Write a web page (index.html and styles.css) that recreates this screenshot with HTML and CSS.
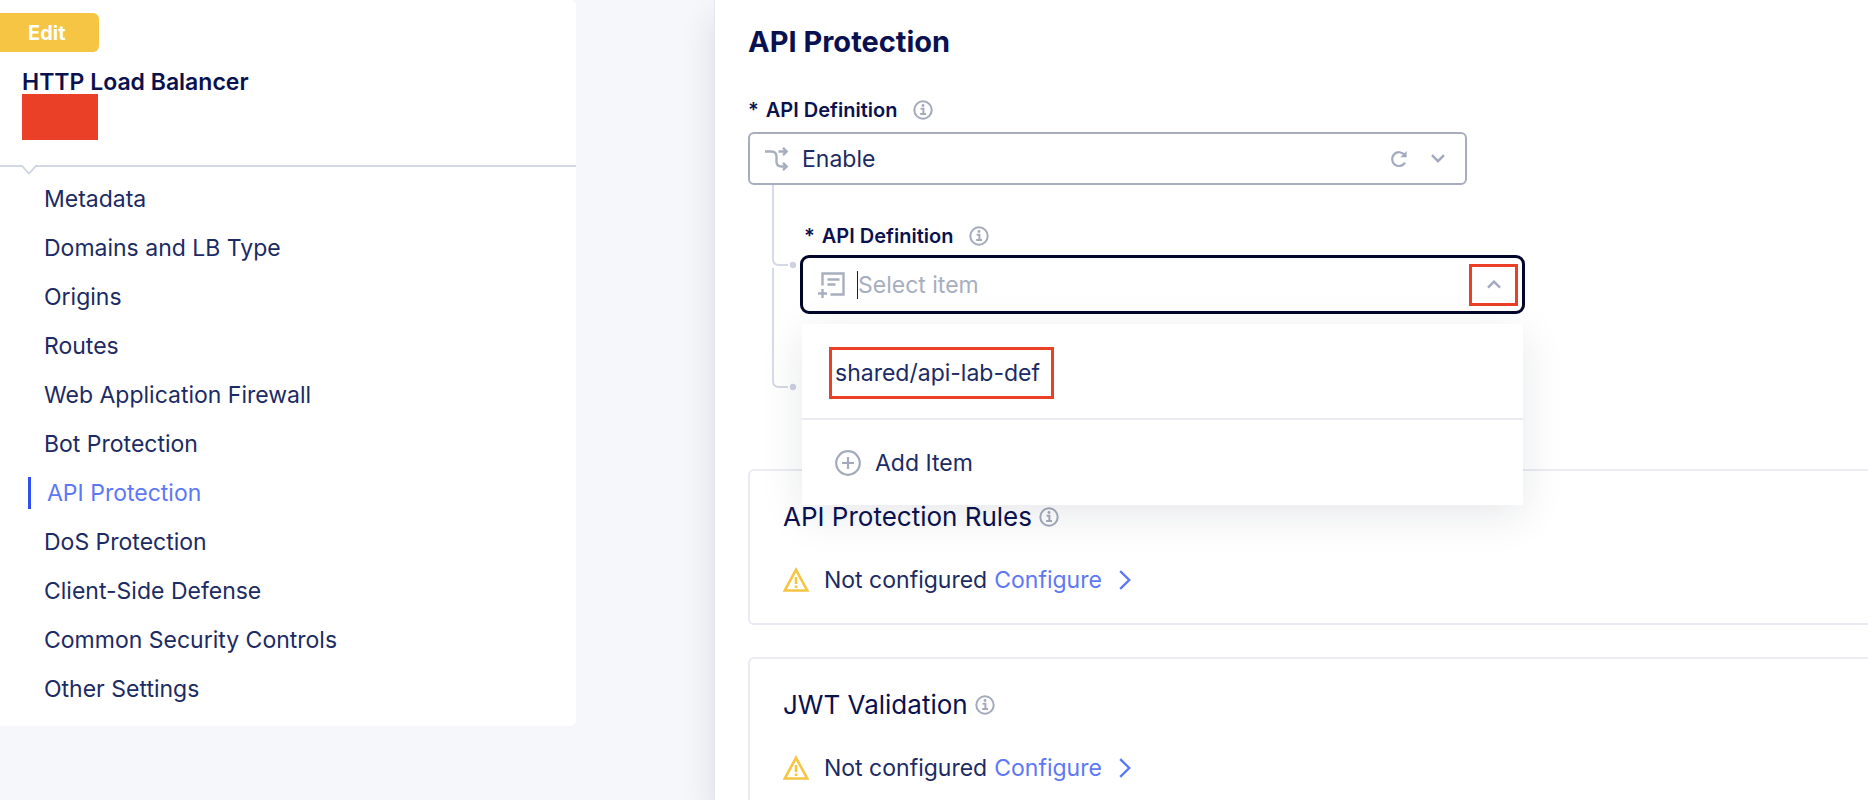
FILE: index.html
```html
<!DOCTYPE html>
<html lang="en">
<head>
<meta charset="utf-8">
<title>HTTP Load Balancer - API Protection</title>
<link rel="stylesheet" href="styles.css">
</head>
<body>
<svg class="sprite" aria-hidden="true">
  <symbol id="info" viewBox="0 0 20 20">
    <circle cx="10" cy="10" r="8.7" fill="none" stroke="currentColor" stroke-width="2"/>
    <path d="M7.6 8.8h2.8v5.2M7.2 14.1h5.8" fill="none" stroke="currentColor" stroke-width="2"/>
    <circle cx="10" cy="5.5" r="1.4" fill="currentColor"/>
  </symbol>
  <symbol id="warning" viewBox="0 0 26 26">
    <path d="M13 2.8 24.2 23.5H1.8Z" fill="none" stroke="currentColor" stroke-width="2.6"/>
    <path d="M13 10v7M13 18.6v2.4" fill="none" stroke="currentColor" stroke-width="2.6"/>
  </symbol>
  <symbol id="next" viewBox="0 0 12 20">
    <path d="m1.2 1.2 9 8.8-9 8.8" fill="none" stroke="currentColor" stroke-width="2.4"/>
  </symbol>
</svg>
<div class="layout">
  <aside class="sidebar">
    <button class="edit" type="button">Edit</button>
    <div class="resource">
      <h2 class="resource-type">HTTP Load Balancer</h2>
      <div class="resource-name"></div>
    </div>
    <div class="divider">
      <svg class="notch" width="16" height="12" viewBox="0 0 16 12"><path d="M0 0h16v1.5L8 9.5 0 1.5Z" fill="#fff"/><path d="M0 1h1l7 7.5L15 1h1" fill="none" stroke="#cfd4e4" stroke-width="1.8"/></svg>
    </div>
    <nav class="nav">
      <a href="#">Metadata</a>
      <a href="#">Domains and LB Type</a>
      <a href="#">Origins</a>
      <a href="#">Routes</a>
      <a href="#">Web Application Firewall</a>
      <a href="#">Bot Protection</a>
      <a href="#" class="active" aria-current="page">API Protection</a>
      <a href="#">DoS Protection</a>
      <a href="#">Client-Side Defense</a>
      <a href="#">Common Security Controls</a>
      <a href="#">Other Settings</a>
    </nav>
  </aside>
  <main class="content">
    <h1 class="title">API Protection</h1>
    <div class="field-label">
      <label for="mode"><span class="star">*</span>API Definition</label>
      <svg class="info" width="20" height="20"><use href="#info"/></svg>
    </div>
    <div class="field">
      <svg class="field-icon" width="24" height="24" viewBox="0 0 24 24" fill="none" stroke="currentColor" stroke-width="2.4"><path d="M0 4.5h6.5q5 0 5 5v5q0 5 5 5H22M13.5 4.5H22M18 .8 21.7 4.5 18 8.2M18 15.8l3.7 3.7-3.7 3.7"/></svg>
      <select id="mode" class="field-control"><option>Enable</option></select>
      <button class="tool" type="button" aria-label="Reset"><svg width="18" height="18" viewBox="0 0 18 18"><path d="M14.6 5A6.9 6.9 0 1 0 15 12.6" fill="none" stroke="currentColor" stroke-width="2.2"/><path d="M16.6 1v6.2h-6.2Z" fill="currentColor"/></svg></button>
      <svg class="caret" width="14" height="9" viewBox="0 0 14 9"><path d="m1 1.2 6 6 6-6" fill="none" stroke="currentColor" stroke-width="2.4"/></svg>
    </div>
    <div class="nested">
      <svg class="branches" width="24" height="212" viewBox="0 0 24 212"><path d="M1 0v74q0 6 6 6h9M1 83v113q0 6 6 6h9" fill="none" stroke="#d3d7e6" stroke-width="1.8"/><circle cx="21" cy="80" r="3.2" fill="#cdd1e2"/><circle cx="21" cy="202" r="3.2" fill="#cdd1e2"/></svg>
      <div class="field-label">
        <label for="definition"><span class="star">*</span>API Definition</label>
        <svg class="info" width="20" height="20"><use href="#info"/></svg>
      </div>
      <div class="combo">
        <div class="field focused">
          <svg class="field-icon" width="28" height="28" viewBox="0 0 28 28" fill="none" stroke="currentColor" stroke-width="2.4"><path d="M4.5 14.5V2.5h21v21H12.5M9.5 8.5h12M9.5 13.5h8M0 22.5h9M4.5 18v9"/></svg>
          <span class="cursor"></span>
          <input id="definition" class="field-control" type="text" placeholder="Select item" role="combobox" aria-expanded="true" aria-controls="options">
          <button class="toggle" type="button" aria-label="Close list"><svg width="14" height="9" viewBox="0 0 14 9"><path d="m1 7.6 6-6 6 6" fill="none" stroke="currentColor" stroke-width="2.4"/></svg></button>
        </div>
        <div class="menu" id="options">
          <div class="menu-list"><button class="option" type="button">shared/api-lab-def</button></div>
          <button class="add" type="button"><svg width="26" height="26" viewBox="0 0 26 26" fill="none" stroke="currentColor" stroke-width="2.2"><circle cx="13" cy="13" r="11.8"/><path d="M13 7v12M7 13h12"/></svg>Add Item</button>
        </div>
      </div>
    </div>
    <div class="cards">
      <section class="card">
        <h3 class="card-title">API Protection Rules<svg class="info" width="20" height="20"><use href="#info"/></svg></h3>
        <div class="status"><svg class="warning" width="26" height="26"><use href="#warning"/></svg><span>Not configured</span><a href="#">Configure<svg width="12" height="20"><use href="#next"/></svg></a></div>
      </section>
      <section class="card">
        <h3 class="card-title">JWT Validation<svg class="info" width="20" height="20"><use href="#info"/></svg></h3>
        <div class="status"><svg class="warning" width="26" height="26"><use href="#warning"/></svg><span>Not configured</span><a href="#">Configure<svg width="12" height="20"><use href="#next"/></svg></a></div>
      </section>
    </div>
  </main>
</div>
</body>
</html>
```
FILE: styles.css
```css
* { box-sizing: border-box; }
body { margin: 0; font-family: Inter, "Liberation Sans", sans-serif; font-size: 23px; line-height: 32px; color: #1c2b63; background: #f6f7fa; }
button, input, select { font: inherit; color: inherit; border: 0; padding: 0; background: none; }
h1, h2, h3 { margin: 0; }
svg { display: block; flex: none; }
.sprite { position: absolute; width: 0; height: 0; }
.layout { display: flex; height: 100vh; overflow: hidden; }

.sidebar { flex: 0 0 576px; align-self: flex-start; padding: 13px 0 13px; background: #fff; border-radius: 0 6px 6px 0; }
.edit { display: block; height: 39px; padding: 0 33px 0 28px; border-radius: 0 6px 6px 0; background: #f5c543; color: #fff; font-size: 20px; font-weight: 700; }
.resource { padding: 18px 22px 25px; }
.resource-type { font-size: 23px; line-height: 24px; font-weight: 600; color: #0a1150; }
.resource-name { width: 76px; height: 46px; background: #ea4027; }
.divider { position: relative; border-top: 2px solid #d3d8e6; }
.notch { position: absolute; left: 21px; top: -2px; }
.nav { display: flex; flex-direction: column; padding-top: 7px; }
.nav a { display: flex; align-items: center; height: 49px; padding-left: 44px; color: inherit; text-decoration: none; }
.nav .active { color: #5e78f5; padding-left: 28px; }
.active::before { content: ""; width: 3px; height: 32px; margin-right: 16px; background: #2f4ff0; }

.content { flex: 1; min-width: 0; margin-left: 138px; padding: 24px 0 0 33px; border-left: 1px solid #e3e6ee; background: #fff; box-shadow: 0 16px 32px rgba(20, 30, 80, .12); }
.title { font-size: 29px; line-height: 36px; font-weight: 700; color: #0a1150; }
.field-label { display: flex; align-items: center; gap: 16px; height: 24px; font-size: 20px; font-weight: 600; color: #0a1150; }
.star { margin-right: 7px; }
.info { color: #a3aabb; }
.title + .field-label { margin: 38px 0 10px; }
.field { display: flex; align-items: center; width: 719px; height: 53px; padding: 0 20px 0 15px; border: 2px solid #a7adbd; border-radius: 6px; background: #fff; }
.field-icon { color: #a7aebf; }
.field-control { flex: 1; min-width: 0; appearance: none; outline: none; }
.field-control::placeholder { color: #a7aebf; opacity: 1; }
select.field-control { height: 32px; margin-left: 13px; }
.tool, .caret, .toggle { color: #a3aabf; }
.tool { margin-right: 23px; }

.nested { position: relative; padding: 39px 0 0 52px; }
.nested .field-label { padding-left: 4px; margin-bottom: 7px; }
.branches { position: absolute; left: 24px; top: 0; }
.combo { position: relative; width: 725px; }
.focused { width: 725px; height: 59px; padding: 0 4px 0 15px; border: 3px solid #03062b; border-radius: 9px; }
.cursor { width: 1px; height: 28px; margin-left: 11px; background: #0f1e57; }
.toggle { display: grid; place-items: center; width: 49px; height: 42px; border: 3px solid #ea4027; }
.menu { position: absolute; z-index: 1; left: 2px; right: 2px; top: 69px; background: #fff; box-shadow: 0 10px 40px rgba(20, 25, 50, .1); }
.menu-list { padding: 23px 27px 19px; border-bottom: 2px solid #e9eaf2; }
.option { display: block; height: 52px; padding: 0 11px 0 3px; border: 3px solid #ea4027; }
.add { display: flex; align-items: center; gap: 14px; width: 100%; height: 85px; padding-left: 33px; }
.add svg { color: #a3aabb; }

.cards { display: grid; gap: 32px; margin: 155px -24px 0 0; }
.card { padding: 30px 34px 27px 33px; border: 2px solid #eaebf3; border-radius: 6px; }
.card-title { display: flex; align-items: center; gap: 7px; font-size: 26px; font-weight: 400; color: #0a1150; }
.status { display: flex; align-items: center; margin-top: 31px; }
.warning { margin-right: 15px; color: #f5c543; }
.status a { display: flex; align-items: center; gap: 17px; margin-left: 7px; color: #5e78f5; text-decoration: none; }
```
